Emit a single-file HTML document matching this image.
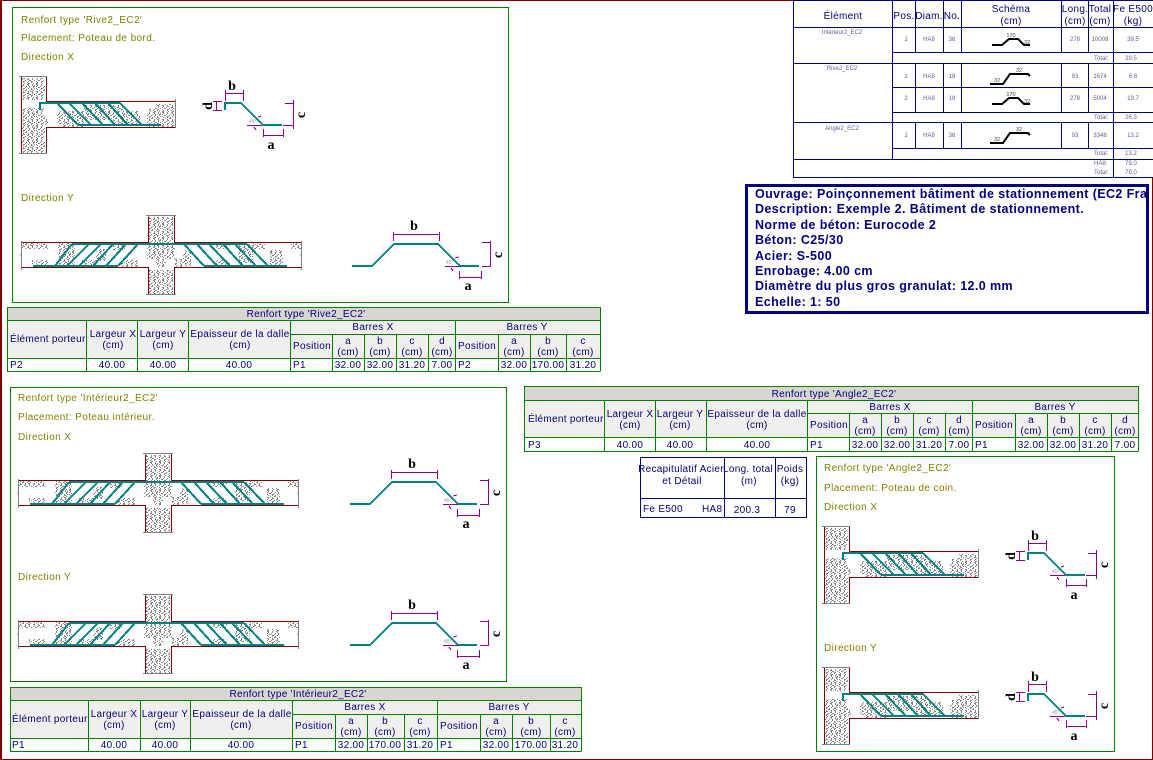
<!DOCTYPE html>
<html lang="fr"><head><meta charset="utf-8"><title>Poinçonnement</title>
<style>
html,body{margin:0;padding:0;background:#fff;width:1153px;height:760px;overflow:hidden}
svg{display:block;position:absolute;left:0;top:0}
text{font-family:"Liberation Sans",sans-serif;font-size:10px;fill:#000080;letter-spacing:.3px}
.m{text-anchor:middle}
.o{fill:#808000;font-size:10px;letter-spacing:.4px}
.g{fill:none;stroke:#008000;stroke-width:1;shape-rendering:crispEdges}
.n{fill:none;stroke:#000080;stroke-width:1;shape-rendering:crispEdges}
.r{fill:none;stroke:#800000;stroke-width:1;shape-rendering:crispEdges}
.y{fill:none;stroke:#808080;stroke-width:1;shape-rendering:crispEdges}
.t{fill:none;stroke:#008080;stroke-width:2;shape-rendering:crispEdges}
.p{fill:none;stroke:#900090;stroke-width:1;shape-rendering:crispEdges}
.l{font-family:"Liberation Serif",serif;font-weight:bold;font-size:14px;fill:#000;letter-spacing:0}
.a{font-size:5px;fill:#999;letter-spacing:0}
.s{font-size:6px;fill:#5f5f98;letter-spacing:0}
.k{fill:none;stroke:#000;stroke-width:2}
.q{font-size:5.5px;fill:#444;letter-spacing:0}
.b{font-size:12.5px;font-weight:bold;letter-spacing:.4px}
</style></head><body>
<svg width="1153" height="760" viewBox="0 0 1153 760" xmlns="http://www.w3.org/2000/svg">
<defs>
<pattern id="c" width="18" height="14" patternUnits="userSpaceOnUse">
<path shape-rendering="crispEdges" stroke="#888" fill="none" d="M0 .5h2m3 0h1m3 0h2m3 0h1M1 1.5h1m3 0h1m4 0h1m3 0h1m1 0h1M0 2.5h1m3 0h1m3 0h1m2 0h1m3 0h2M2 3.5h2m3 0h1m3 0h1m3 0h1M0 4.5h1m4 0h2m3 0h1m2 0h1m2 0h1M1 5.5h1m3 0h1m2 0h1m4 0h2M3 6.5h1m3 0h2m3 0h1m2 0h1M0 7.5h2m3 0h1m4 0h1m2 0h2M1 8.5h1m3 0h2m3 0h1m3 0h1M0 9.500h1m3 0h1m4 0h2m3 0h1M2 10.500h2m3 0h1m3 0h2m3 0h1M0 11.500h1m4 0h2m3 0h1m2 0h2M1 12.500h1m3 0h1m3 0h1m3 0h1M0 13.500h2m4 0h1m3 0h2m3 0h1"/>
</pattern>
<g id="A">
<path fill="url(#c)" d="M22 78h23v22H22zM22 108h15v-1h7v10h4v8h-3v28H22zM57 111h27v16H62v-3h-5zM84 105h26v15H84zM100 108h12v-3h14v6h14v13h-28v-4h-12zM147 109h8v-5h19v23h-27z"/>
<path class="r" d="M21.500 77v76M46.500 77v24.500h129M46.500 153v-25.500h129"/>
<path class="y" d="M19 76.500h28M19 153.500h28M175.500 99v29"/>
<path class="t" d="M40 110v-7h80M57 103l21 22M69 103l22 22M82 103l21 22M95 103l20 22M108 103l20 22M120 103l22 22M78 125h83"/>
</g>
<g id="B">
<path class="t" d="M225 110v-7h16l22 22h19"/>
<path class="p" d="M225.500 90v11M243.500 90v11M225 93.500h18M213 101.500h9M213 110.500h9M216.500 101v10M285 103.500h9M283 125.500h11M293.500 100v29M263.500 129v8M283.500 129v8M263 135.500h21M247 125.500h15M258 117l3-1M254 127l2 3"/>
<text class="l m" x="232" y="90">b</text>
<text class="l" transform="translate(212,106) rotate(-90)" text-anchor="middle">d</text>
<text class="l" transform="translate(305,115) rotate(-90)" text-anchor="middle">c</text>
<text class="l m" x="271" y="149">a</text>
<text class="a" x="249" y="123">45°</text>
</g>
<g id="C">
<path fill="url(#c)" d="M149 217h24v26h-24zM147 244h28v15h-9v8h-10v-8h-9zM149 270h24v24h-24zM22 243h26v6H22zM32 260h16v6H32zM58 243h17v23H58zM82 260h14v6H82zM96 249h10v12H96zM113 244h13v6h-13zM120 260h18v7h-18zM183 250h8v16h-8zM175 259h10v8h-10zM215 260h15v6h-15zM213 244h17v5h-17zM238 244h15v19h-15zM251 243h14v6h-14zM270 250h13v16h-13zM291 243h10v6h-10z"/>
<path class="r" d="M21 242.500h127.500v-26M174.500 216v26.500h127M21 267.500h127.500v27M174.500 294v-26.500h127"/>
<path class="y" d="M146 215.500h30M146 294.500h30M21.500 241v29M301.500 241v29M20 255h2M300 255h2"/>
<path class="t" d="M72 244h175M33 266h85M204 266h83M72 244l-17 22M89 244l-22 22M101 244l-22 22M113 244l-20 22M126 244l-20 22M138 244l-20 22M184 244l20 22M197 244l20 22M209 244l21 22M223 244l20 22M235 244l21 22M247 244l21 22"/>
</g>
<g id="D">
<path class="t" d="M352 266h20l22-22h44l22 22h19"/>
<path class="p" d="M393.500 232v9M439.500 232v9M393 234.500h47M482 242.500h9M482 266.500h9M490.500 241v26M459.500 271v8M481.500 271v8M459 277.500h23M445 266.500h15M455 258l4-1M451 268l2 3"/>
<text class="l m" x="414" y="230">b</text>
<text class="l" transform="translate(502,255) rotate(-90)" text-anchor="middle">c</text>
<text class="l m" x="468" y="290">a</text>
<text class="a" x="446" y="264">45°</text>
</g>
<clipPath id="bx"><rect x="748" y="186" width="399" height="126"/></clipPath>
</defs>

<!-- page border -->
<path class="r" d="M0.500 760V.5H793M1152.500 177V760M0 759.500h1153"/>
<path class="r" d="M1.500 0V760"/>

<!-- Rive frame -->
<rect class="g" x="12.500" y="7.500" width="496" height="295"/>
<text class="o" x="21" y="23">Renfort type 'Rive2_EC2'</text>
<text class="o" x="21" y="41">Placement: Poteau de bord.</text>
<text class="o" x="21" y="60">Direction X</text>
<text class="o" x="21" y="201">Direction Y</text>
<use href="#A"/><use href="#B"/><use href="#C"/><use href="#D"/>

<!-- Rive table -->
<g transform="translate(0,307)">
<rect x="7" y="0" width="593" height="51" fill="#f0efee"/><rect x="7" y="0" width="593" height="13" fill="#d9d6d1"/>
<path class="g" d="M7.500 0v64.500M600.500 0v64.500M7 .5h593M7 13.500h593M7 51.500h593M7 64.500h593M290 27.500h310M86.500 13v51M137.500 13v51M188.500 13v51M290.500 13v51M455.500 13v51M332.500 27v37M364.500 27v37M396.500 27v37M428.500 27v37M498.500 27v37M530.500 27v37M566.500 27v37"/>
<text class="m" x="306" y="10">Renfort type 'Rive2_EC2'</text>
<text x="10" y="35">Élément porteur</text>
<text class="m" x="113" y="30">Largeur X</text><text class="m" x="113" y="41">(cm)</text>
<text class="m" x="163" y="30">Largeur Y</text><text class="m" x="163" y="41">(cm)</text>
<text class="m" x="240" y="30">Epaisseur de la dalle</text><text class="m" x="240" y="41">(cm)</text>
<text class="m" x="373" y="23">Barres X</text><text class="m" x="527" y="23">Barres Y</text>
<text x="293" y="42">Position</text><text x="458" y="42">Position</text>
<text class="m" x="348" y="37">a</text><text class="m" x="348" y="48">(cm)</text>
<text class="m" x="380" y="37">b</text><text class="m" x="380" y="48">(cm)</text>
<text class="m" x="412" y="37">c</text><text class="m" x="412" y="48">(cm)</text>
<text class="m" x="442" y="37">d</text><text class="m" x="442" y="48">(cm)</text>
<text class="m" x="514" y="37">a</text><text class="m" x="514" y="48">(cm)</text>
<text class="m" x="548" y="37">b</text><text class="m" x="548" y="48">(cm)</text>
<text class="m" x="583" y="37">c</text><text class="m" x="583" y="48">(cm)</text>
<text x="10" y="61">P2</text><text class="m" x="112" y="61">40.00</text><text class="m" x="163" y="61">40.00</text><text class="m" x="239" y="61">40.00</text>
<text x="293" y="61">P1</text><text class="m" x="348" y="61">32.00</text><text class="m" x="380" y="61">32.00</text><text class="m" x="412" y="61">31.20</text><text class="m" x="442" y="61">7.00</text>
<text x="458" y="61">P2</text><text class="m" x="514" y="61">32.00</text><text class="m" x="548" y="61">170.00</text><text class="m" x="583" y="61">31.20</text>
</g>

<!-- Interieur frame -->
<rect class="g" x="10.500" y="387.500" width="496" height="294"/>
<text class="o" x="18" y="401">Renfort type 'Intérieur2_EC2'</text>
<text class="o" x="18" y="420">Placement: Poteau intérieur.</text>
<text class="o" x="18" y="440">Direction X</text>
<text class="o" x="18" y="580">Direction Y</text>
<use href="#C" x="-3" y="238"/><use href="#D" x="-2" y="238"/>
<use href="#C" x="-3" y="379"/><use href="#D" x="-2" y="379"/>

<!-- Interieur table -->
<g transform="translate(0,687)">
<rect x="10" y="0" width="571" height="51" fill="#f0efee"/><rect x="10" y="0" width="571" height="13" fill="#d9d6d1"/>
<path class="g" d="M10.500 0v64.500M581.500 0v64.500M10 .5h571M10 13.500h571M10 51.500h571M10 64.500h571M292 27.500h289M88.500 13v51M140.500 13v51M190.500 13v51M292.500 13v51M437.500 13v51M335.500 27v37M367.500 27v37M404.500 27v37M480.500 27v37M512.500 27v37M550.500 27v37"/>
<text class="m" x="298" y="10">Renfort type 'Intérieur2_EC2'</text>
<text x="12" y="35">Élément porteur</text>
<text class="m" x="114" y="30">Largeur X</text><text class="m" x="114" y="41">(cm)</text>
<text class="m" x="165" y="30">Largeur Y</text><text class="m" x="165" y="41">(cm)</text>
<text class="m" x="242" y="30">Epaisseur de la dalle</text><text class="m" x="241" y="41">(cm)</text>
<text class="m" x="365" y="23">Barres X</text><text class="m" x="509" y="23">Barres Y</text>
<text x="295" y="42">Position</text><text x="440" y="42">Position</text>
<text class="m" x="351" y="37">a</text><text class="m" x="351" y="48">(cm)</text>
<text class="m" x="385" y="37">b</text><text class="m" x="385" y="48">(cm)</text>
<text class="m" x="420" y="37">c</text><text class="m" x="420" y="48">(cm)</text>
<text class="m" x="496" y="37">a</text><text class="m" x="496" y="48">(cm)</text>
<text class="m" x="531" y="37">b</text><text class="m" x="531" y="48">(cm)</text>
<text class="m" x="565" y="37">c</text><text class="m" x="565" y="48">(cm)</text>
<text x="12" y="61">P1</text><text class="m" x="114" y="61">40.00</text><text class="m" x="165" y="61">40.00</text><text class="m" x="241" y="61">40.00</text>
<text x="295" y="61">P1</text><text class="m" x="351" y="61">32.00</text><text class="m" x="385" y="61">170.00</text><text class="m" x="420" y="61">31.20</text>
<text x="440" y="61">P1</text><text class="m" x="496" y="61">32.00</text><text class="m" x="531" y="61">170.00</text><text class="m" x="565" y="61">31.20</text>
</g>

<!-- Angle table -->
<g transform="translate(0,386)">
<rect x="524" y="0" width="614" height="51" fill="#f0efee"/><rect x="524" y="0" width="614" height="14" fill="#d9d6d1"/>
<path class="g" d="M524.500 0v65.500M1138.500 0v65.500M524 .5h614M524 14.500h614M524 51.500h614M524 65.500h614M807 27.500h331M604.500 14v51M655.500 14v51M706.500 14v51M807.500 14v51M972.500 14v51M849.500 27v38M881.500 27v38M913.500 27v38M945.500 27v38M1015.500 27v38M1047.500 27v38M1079.500 27v38M1111.500 27v38"/>
<text class="m" x="834" y="11">Renfort type 'Angle2_EC2'</text>
<text x="528" y="36">Élément porteur</text>
<text class="m" x="630" y="31">Largeur X</text><text class="m" x="630" y="42">(cm)</text>
<text class="m" x="680" y="31">Largeur Y</text><text class="m" x="680" y="42">(cm)</text>
<text class="m" x="757" y="31">Epaisseur de la dalle</text><text class="m" x="757" y="42">(cm)</text>
<text class="m" x="890" y="24">Barres X</text><text class="m" x="1055" y="24">Barres Y</text>
<text x="810" y="42">Position</text><text x="975" y="42">Position</text>
<text class="m" x="865" y="37">a</text><text class="m" x="865" y="48">(cm)</text>
<text class="m" x="897" y="37">b</text><text class="m" x="897" y="48">(cm)</text>
<text class="m" x="929" y="37">c</text><text class="m" x="929" y="48">(cm)</text>
<text class="m" x="959" y="37">d</text><text class="m" x="959" y="48">(cm)</text>
<text class="m" x="1031" y="37">a</text><text class="m" x="1031" y="48">(cm)</text>
<text class="m" x="1063" y="37">b</text><text class="m" x="1063" y="48">(cm)</text>
<text class="m" x="1095" y="37">c</text><text class="m" x="1095" y="48">(cm)</text>
<text class="m" x="1125" y="37">d</text><text class="m" x="1125" y="48">(cm)</text>
<text x="528" y="62">P3</text><text class="m" x="630" y="62">40.00</text><text class="m" x="680" y="62">40.00</text><text class="m" x="757" y="62">40.00</text>
<text x="810" y="62">P1</text><text class="m" x="865" y="62">32.00</text><text class="m" x="897" y="62">32.00</text><text class="m" x="929" y="62">31.20</text><text class="m" x="959" y="62">7.00</text>
<text x="975" y="62">P1</text><text class="m" x="1031" y="62">32.00</text><text class="m" x="1063" y="62">32.00</text><text class="m" x="1095" y="62">31.20</text><text class="m" x="1125" y="62">7.00</text>
</g>

<!-- Recap -->
<path class="n" d="M640.500 457v60M724.500 457v60M775.500 457v60M806.500 457v60M640 457.500h167M640 498.500h167M640 517.500h167"/>
<text class="m" x="681" y="472">Recapitulatif Acier</text><text class="m" x="682" y="484">et Détail</text>
<text class="m" x="748" y="472">Long. total</text><text class="m" x="749" y="484">(m)</text>
<text class="m" x="790" y="472">Poids</text><text class="m" x="790" y="484">(kg)</text>
<text x="643" y="512">Fe E500</text><text x="702" y="512">HA8</text>
<text class="m" x="747" y="513">200.3</text><text class="m" x="790" y="513">79</text>

<!-- Angle frame -->
<rect class="g" x="816.500" y="456.500" width="298" height="295"/>
<text class="o" x="824" y="471">Renfort type 'Angle2_EC2'</text>
<text class="o" x="824" y="491">Placement: Poteau de coin.</text>
<text class="o" x="824" y="510">Direction X</text>
<text class="o" x="824" y="651">Direction Y</text>
<use href="#A" x="803" y="450"/><use href="#B" x="803" y="450"/>
<use href="#A" x="803" y="591"/><use href="#B" x="803" y="591"/>

<!-- Top-right table -->
<rect x="793" y="0" width="360" height="178" fill="#fff"/>
<path class="n" d="M793.500 0v177M892.500 0v159M915.500 0v52M943.500 0v52M961.500 0v52M1061.500 0v52M1088.500 0v52M915.500 63v49M943.500 63v49M961.500 63v49M1061.500 63v49M1088.500 63v49M915.500 122v26M943.500 122v26M961.500 122v26M1061.500 122v26M1088.500 122v26M1113.500 0v177M793 .5h360M793 27.500h360M892 52.500h261M793 63.500h360M892 87.500h261M892 112.500h261M793 122.500h360M892 148.500h261M793 159.500h360M793 177.500h360"/>
<text class="m" x="843" y="19">Élément</text>
<text class="m" x="904" y="19">Pos.</text><text class="m" x="929" y="19">Diam.</text><text class="m" x="952" y="19">No.</text>
<text class="m" x="1011" y="12">Schéma</text><text class="m" x="1011" y="24">(cm)</text>
<text class="m" x="1075" y="12">Long.</text><text class="m" x="1075" y="24">(cm)</text>
<text class="m" x="1100" y="12">Total</text><text class="m" x="1100" y="24">(cm)</text>
<text class="m" x="1133" y="12">Fe E500</text><text class="m" x="1133" y="24">(kg)</text>
<text class="s m" x="842" y="34">Intérieur2_EC2</text><text class="s m" x="842" y="70">Rive2_EC2</text><text class="s m" x="842" y="130">Angle2_EC2</text>
<text class="s m" x="906" y="41">1</text><text class="s m" x="929" y="41">HA8</text><text class="s m" x="952" y="41">36</text><text class="s m" x="1075" y="41">278</text><text class="s m" x="1100" y="41">10008</text><text class="s m" x="1133" y="41">39.5</text>
<text class="s" x="1094" y="60">Total:</text><text class="s m" x="1131" y="60">39.5</text>
<text class="s m" x="906" y="78">1</text><text class="s m" x="929" y="78">HA8</text><text class="s m" x="952" y="78">18</text><text class="s m" x="1075" y="78">93</text><text class="s m" x="1100" y="78">1674</text><text class="s m" x="1133" y="78">6.6</text>
<text class="s m" x="906" y="100">2</text><text class="s m" x="929" y="100">HA8</text><text class="s m" x="952" y="100">18</text><text class="s m" x="1075" y="100">278</text><text class="s m" x="1100" y="100">5004</text><text class="s m" x="1133" y="100">19.7</text>
<text class="s" x="1094" y="119">Total:</text><text class="s m" x="1131" y="119">26.3</text>
<text class="s m" x="906" y="137">1</text><text class="s m" x="929" y="137">HA8</text><text class="s m" x="952" y="137">36</text><text class="s m" x="1075" y="137">93</text><text class="s m" x="1100" y="137">3348</text><text class="s m" x="1133" y="137">13.2</text>
<text class="s" x="1094" y="155">Total:</text><text class="s m" x="1131" y="155">13.2</text>
<text class="s" x="1094" y="165">HA8:</text><text class="s m" x="1131" y="165">79.0</text>
<text class="s" x="1094" y="174">Total:</text><text class="s m" x="1131" y="174">79.0</text>
<path class="k" d="M992 45h10l7-6h9l6 6h6"/><text class="q m" x="1011" y="37">170</text><text class="q m" x="1027" y="44">32</text>
<path class="k" d="M990 84h13l7-10h18l2 2"/><text class="q m" x="997" y="82">32</text><text class="q m" x="1019" y="72">32</text>
<path class="k" d="M992 104h10l7-6h9l6 6h6"/><text class="q m" x="1011" y="96">170</text><text class="q m" x="1027" y="103">32</text>
<path class="k" d="M990 143h13l7-10h18l2 2"/><text class="q m" x="997" y="141">32</text><text class="q m" x="1019" y="131">32</text>

<!-- Ouvrage box -->
<rect x="746.500" y="185.500" width="401" height="127" fill="#fff" stroke="#000080" stroke-width="3"/>
<g clip-path="url(#bx)">
<text class="b" x="755" y="198">Ouvrage: Poinçonnement bâtiment de stationnement (EC2 France)</text>
<text class="b" x="755" y="213">Description: Exemple 2. Bâtiment de stationnement.</text>
<text class="b" x="755" y="229">Norme de béton: Eurocode 2</text>
<text class="b" x="755" y="244">Béton: C25/30</text>
<text class="b" x="755" y="260">Acier: S-500</text>
<text class="b" x="755" y="275">Enrobage: 4.00 cm</text>
<text class="b" x="755" y="290">Diamètre du plus gros granulat: 12.0 mm</text>
<text class="b" x="755" y="306">Echelle: 1: 50</text>
</g>
</svg>
</body></html>
